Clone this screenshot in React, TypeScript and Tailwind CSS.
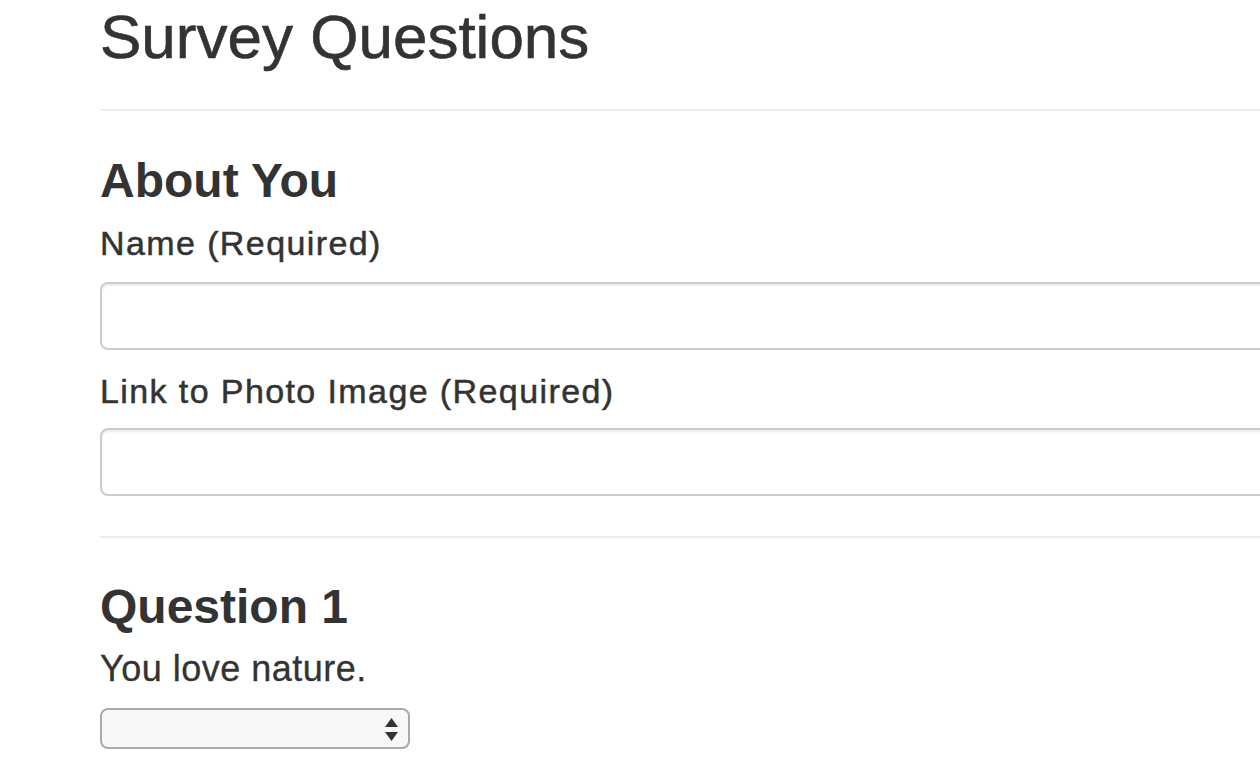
import React from "react";

const labelCls =
  "block text-[34px] leading-[40px] tracking-[1.4px] [-webkit-text-stroke:0.5px_#333]";
const inputCls =
  "block h-[68px] w-full rounded-[8px] border-2 border-[#ccc] bg-white shadow-[inset_0_2px_2px_rgba(0,0,0,0.075)] outline-none";

export default function App() {
  return (
    <div className="h-[762px] w-[1260px] overflow-hidden bg-white text-[#333] [font-family:'Liberation_Sans',Arial,sans-serif]">
      <div className="ml-[100px] w-[1400px]">
        <div className="border-b-2 border-[#eee] pb-[39px] pt-[4px]">
          <h2 className="text-[62px] leading-[66px] font-normal [-webkit-text-stroke:0.6px_#333]">Survey Questions</h2>
        </div>
        <h3 className="mt-[43px] text-[48px] leading-[53px] font-bold">About You</h3>
        <label className={"mt-[16px] " + labelCls}>Name (Required)</label>
        <input type="text" className={"mt-[19px] " + inputCls} />
        <label className={"mt-[21px] " + labelCls}>Link to Photo Image (Required)</label>
        <input type="text" className={"mt-[17px] " + inputCls} />
        <div className="mt-[40px] border-t-2 border-[#eee]" />
        <h3 className="mt-[42px] text-[48px] leading-[53px] font-bold">Question 1</h3>
        <p className="mt-[10px] text-[36px] leading-[51px] tracking-[0.5px] [-webkit-text-stroke:0.3px_#333]">You love nature.</p>
        <div className="relative mt-[14px] h-[41px] w-[310px] rounded-[8px] border-2 border-[#aaa] bg-[#f8f8f8]">
          <svg
            className="absolute right-[10px] top-[8px]"
            width="13"
            height="23"
            viewBox="0 0 13 23"
          >
            <polygon points="6.5,0 13,9 0,9" fill="#333" />
            <polygon points="0,14 13,14 6.5,23" fill="#333" />
          </svg>
        </div>
      </div>
    </div>
  );
}
